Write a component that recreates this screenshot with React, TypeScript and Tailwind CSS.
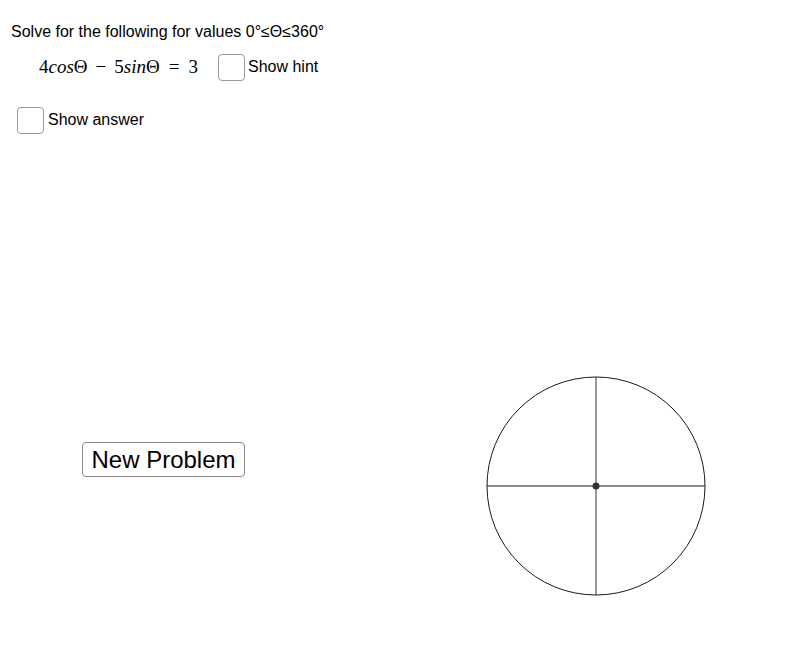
import React, { useState } from 'react';

function Box({ checked, onClick }: { checked: boolean; onClick: () => void }) {
  return (
    <button
      onClick={onClick}
      className="w-[27px] h-[27px] rounded-[4px] border border-[#9a9a9a] bg-white flex items-center justify-center shrink-0"
    >
      {checked && <span className="text-[16px] leading-none text-[#333]">✓</span>}
    </button>
  );
}

function UnitCircle() {
  return (
    <svg width="222" height="222" viewBox="0 0 222 222">
      <circle cx="111" cy="111" r="109" fill="none" stroke="#1a1a1a" strokeWidth="1" />
      <line x1="2" y1="111" x2="220" y2="111" stroke="#1a1a1a" strokeWidth="1" />
      <line x1="111" y1="2" x2="111" y2="220" stroke="#333" strokeWidth="1" />
      <circle cx="111" cy="111" r="3.5" fill="#333" />
    </svg>
  );
}

export default function App() {
  const [hint, setHint] = useState(false);
  const [answer, setAnswer] = useState(false);

  return (
    <div className="w-[799px] h-[655px] bg-white text-black font-['Liberation_Sans',Arial,sans-serif] overflow-hidden">
      <div className="pl-[11px] pt-[22px] text-[16px] leading-[20px]">
        Solve for the following for values 0°≤Θ≤360°
      </div>

      <div className="flex items-center mt-[11px] h-[28px]">
        <div className="pl-[39px] w-[218px] font-['Liberation_Serif','Times_New_Roman',serif] text-[19px] whitespace-nowrap">
          <span>4</span>
          <span className="italic">cos</span>
          <span>Θ</span>
          <span className="px-[8px]">−</span>
          <span>5</span>
          <span className="italic">sin</span>
          <span>Θ</span>
          <span className="px-[9px]">=</span>
          <span>3</span>
        </div>
        <Box checked={hint} onClick={() => setHint(!hint)} />
        <span className="ml-[3px] text-[16px]">Show hint</span>
      </div>

      <div className="flex items-center mt-[25px] pl-[17px] h-[28px]">
        <Box checked={answer} onClick={() => setAnswer(!answer)} />
        <span className="ml-[4px] text-[16px]">Show answer</span>
      </div>

      <div className="flex items-start mt-[241px]">
        <button className="ml-[82px] mt-[67px] w-[163px] h-[35px] border border-[#8a8a8a] rounded-[4px] bg-white text-[24px] leading-none flex items-center justify-center">
          New Problem
        </button>
        <div className="ml-[240px]">
          <UnitCircle />
        </div>
      </div>
    </div>
  );
}
